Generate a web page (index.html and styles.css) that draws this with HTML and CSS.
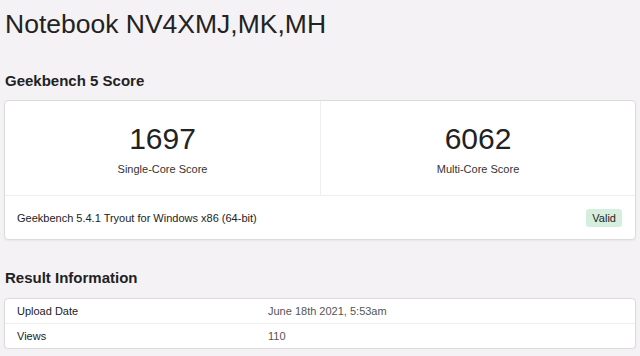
FILE: index.html
```html
<!DOCTYPE html>
<html lang="en">
<head>
    <meta charset="UTF-8">
    <meta name="viewport" content="width=device-width, initial-scale=1">
    <title>Notebook NV4XMJ,MK,MH - Geekbench</title>
    <link rel="stylesheet" href="styles.css">
</head>
<body>
    <h1 class="page-title">Notebook NV4XMJ,MK,MH</h1>

    <h2 class="section-title">Geekbench 5 Score</h2>
    <div class="card score-card">
        <div class="scores">
            <div class="score">
                <div class="score-value">1697</div>
                <div class="score-label">Single-Core Score</div>
            </div>
            <div class="score">
                <div class="score-value">6062</div>
                <div class="score-label">Multi-Core Score</div>
            </div>
        </div>
        <div class="score-footer">
            <span>Geekbench 5.4.1 Tryout for Windows x86 (64-bit)</span>
            <span class="badge-valid">Valid</span>
        </div>
    </div>

    <h2 class="section-title section-title-info">Result Information</h2>
    <div class="card info-table">
        <div class="info-row">
            <div class="info-name">Upload Date</div>
            <div class="info-value">June 18th 2021, 5:53am</div>
        </div>
        <div class="info-row">
            <div class="info-name">Views</div>
            <div class="info-value">110</div>
        </div>
    </div>
</body>
</html>
```

FILE: styles.css
```css
:root {
    --bg: #f5f2f6;
    --card: #ffffff;
    --border: #dcdadd;
    --line: #eeeeee;
    --text: #222222;
    --muted: #555555;
    --valid-bg: #d6eedd;
}
body {
    background: var(--bg);
    color: var(--text);
    margin: 0;
    padding: 0 4px;
    font-family: "Liberation Sans", Arial, sans-serif;
}
.page-title {
    font-size: 26.5px;
    font-weight: normal;
    line-height: 32px;
    margin: 8px 0 0 1px;
}
.section-title {
    font-size: 15px;
    font-weight: bold;
    line-height: 18px;
    margin: 32px 0 10px 1px;
}
.section-title-info {
    margin-top: 29px;
    margin-bottom: 11px;
}
.card {
    background: var(--card);
    border: 1px solid var(--border);
    border-radius: 4px;
    box-shadow: 0 1px 2px rgba(0,0,0,0.05);
}
.scores {
    display: grid;
    grid-template-columns: 1fr 1fr;
    border-bottom: 1px solid var(--line);
}
.score {
    text-align: center;
    padding: 20px 0 19px;
}
.score + .score {
    border-left: 1px solid var(--line);
}
.score-value {
    font-size: 30px;
    line-height: 36px;
    margin-bottom: 5px;
}
.score-label {
    font-size: 11px;
    line-height: 14px;
    color: #333;
}
.score-footer {
    display: flex;
    align-items: center;
    justify-content: space-between;
    height: 43px;
    padding: 0 13px 0 12px;
    font-size: 11px;
}
.badge-valid {
    background: var(--valid-bg);
    border-radius: 3px;
    padding: 3px 6px;
    line-height: 12px;
}
.info-row {
    display: grid;
    grid-template-columns: 251px 1fr;
    align-items: center;
    height: 24px;
    font-size: 11px;
    padding-left: 12px;
}
.info-row + .info-row {
    border-top: 1px solid var(--line);
}
.info-value {
    color: var(--muted);
}
```
